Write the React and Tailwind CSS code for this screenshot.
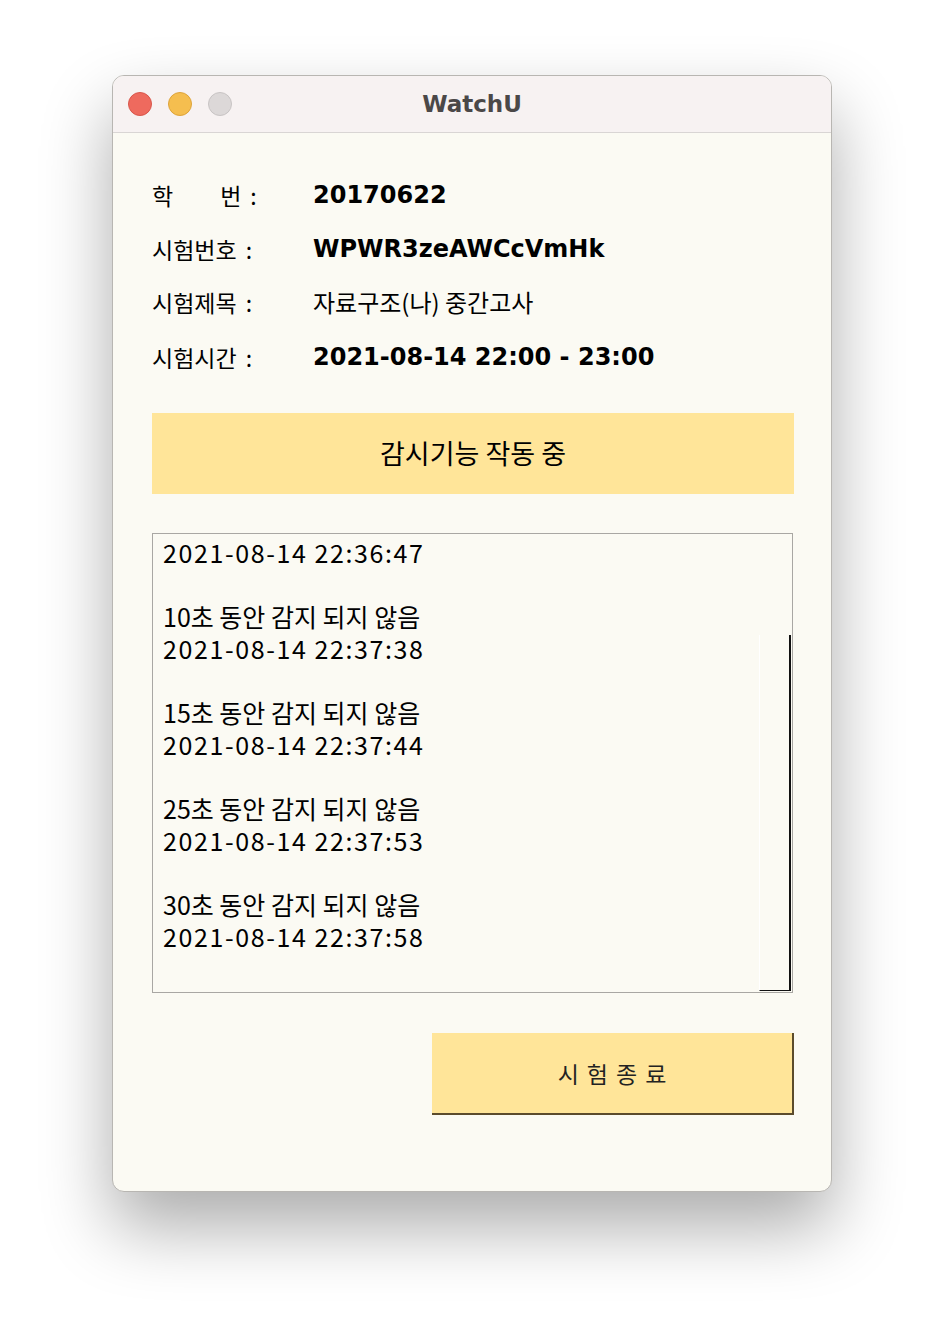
import React from "react";

const font = { fontFamily: '"Liberation Sans", "Noto Sans CJK KR", sans-serif' };
const kr = { fontFamily: '"Noto Sans CJK KR", "Liberation Sans", sans-serif' };
const dv = { fontFamily: '"DejaVu Sans", "Noto Sans CJK KR", sans-serif' };

const logs = [
  ["10초 동안 감지 되지 않음", "2021-08-14 22:37:38"],
  ["15초 동안 감지 되지 않음", "2021-08-14 22:37:44"],
  ["25초 동안 감지 되지 않음", "2021-08-14 22:37:53"],
  ["30초 동안 감지 되지 않음", "2021-08-14 22:37:58"],
];

function Label({ children }) {
  return (
    <div className="w-[161px] text-[23px] flex" style={kr}>
      <span>{children}</span>
      <span className="ml-[9px]">:</span>
    </div>
  );
}

export default function App() {
  return (
    <div className="w-[944px] h-[1340px] bg-white pt-[75px] pl-[112px]" style={font}>
      <div className="w-[720px] h-[1117px] rounded-[12px] overflow-hidden border border-[#b8b6b2] bg-[#fbfaf3] shadow-[0_35px_70px_rgba(0,0,0,0.33)] flex flex-col">
        <div className="h-[57px] shrink-0 bg-[#f7f2f2] border-b border-[#d9d5d4] flex items-center relative">
          <div className="flex gap-[16px] pl-[15px]">
            <div className="w-[24px] h-[24px] rounded-full bg-[#ee6a5e] border border-[#d9564b]" />
            <div className="w-[24px] h-[24px] rounded-full bg-[#f5be4f] border border-[#dea43a]" />
            <div className="w-[24px] h-[24px] rounded-full bg-[#dcd8d8] border border-[#c8c4c4]" />
          </div>
          <div className="absolute left-0 right-0 text-center text-[23px] font-bold text-[#4b4848] pointer-events-none" style={dv}>
            WatchU
          </div>
        </div>

        <div className="flex-1 pl-[39px] pr-[37px] pt-[37px]">
          <div className="flex flex-col text-black">
            <div className="flex items-center h-[50px]">
              <div className="w-[161px] text-[23px] flex" style={kr}>
                <span>학</span>
                <span className="ml-[47px]">번</span>
                <span className="ml-[9px]">:</span>
              </div>
              <div className="text-[24px] font-bold" style={dv}>20170622</div>
            </div>
            <div className="flex items-center h-[58px]">
              <Label>시험번호</Label>
              <div className="text-[24px] font-bold" style={dv}>WPWR3zeAWCcVmHk</div>
            </div>
            <div className="flex items-center h-[48px]">
              <Label>시험제목</Label>
              <div className="text-[24px]" style={kr}>자료구조(나) 중간고사</div>
            </div>
            <div className="flex items-center h-[62px]">
              <Label>시험시간</Label>
              <div className="text-[24px] font-bold" style={dv}>2021-08-14 22:00 - 23:00</div>
            </div>
          </div>

          <div className="mt-[25px] h-[81px] bg-[#ffe599] flex items-center justify-center text-[27px] text-black" style={kr}>
            감시기능 작동 중
          </div>

          <div className="mt-[39px] h-[460px] w-[641px] border border-[#a9a7a3] relative pl-[10px] pt-[2px] text-[25px] leading-[32px] text-black" style={kr}>
            <div className="tracking-[1.6px]">2021-08-14 22:36:47</div>
            <div className="h-[32px]" />
            {logs.map(([a, b], i) => (
              <div key={i}>
                <div>{a}</div>
                <div className="tracking-[1.6px]">{b}</div>
                <div className="h-[32px]" />
              </div>
            ))}
            <div className="absolute right-[1px] top-[101px] bottom-[1px] w-[32px] border-r-2 border-b border-r-[#111] border-b-[#111] border-l border-l-[#ffffff]" />
          </div>

          <div className="mt-[40px] flex justify-end">
            <div className="w-[362px] h-[82px] bg-[#ffe599] border-r-2 border-b-2 border-[#5b4b2c] flex items-center justify-center text-[23px] text-[#222]" style={kr}>
              <span className="tracking-[8px] mr-[-8px]">시험종료</span>
            </div>
          </div>
        </div>
      </div>
    </div>
  );
}
